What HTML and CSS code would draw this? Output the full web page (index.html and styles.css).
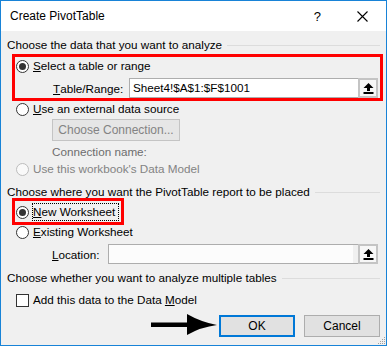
FILE: index.html
```html
<!DOCTYPE html>
<html lang="en">
<head>
    <meta charset="UTF-8">
    <meta name="viewport" content="width=device-width, initial-scale=1.0">
    <title>Create PivotTable</title>
    <link rel="stylesheet" href="styles.css">
</head>
<body>
    <div class="dialog">
        <div class="titlebar">
            <span class="title">Create PivotTable</span>
            <span class="help">?</span>
            <svg class="close" width="11" height="11" viewBox="0 0 11 11">
                <path d="M0.5 0.5 L10.5 10.5 M10.5 0.5 L0.5 10.5" stroke="#000" stroke-width="1.1" fill="none"/>
            </svg>
        </div>

        <div class="content">
            <div class="group-label"><span>Choose the data that you want to analyze</span></div>

            <div class="highlight highlight-range">
                <div class="option">
                    <span class="radio checked"></span>
                    <span><u>S</u>elect a table or range</span>
                </div>
                <div class="field">
                    <span class="field-label field-label-range"><u>T</u>able/Range:</span>
                    <div class="field-input">Sheet4!$A$1:$F$1001</div>
                    <span class="picker">
                        <svg width="11" height="11" viewBox="0 0 11 11">
                            <path d="M5.5 0 L10.5 5 L7 5 L7 8 L4 8 L4 5 L0.5 5 Z" fill="#000"/>
                            <rect x="0.5" y="9" width="10" height="2" fill="#000"/>
                        </svg>
                    </span>
                </div>
            </div>

            <div class="option">
                <span class="radio"></span>
                <span><u>U</u>se an external data source</span>
            </div>
            <button class="btn btn-disabled btn-connection" disabled>Choose Connection...</button>
            <div class="conn-name">Connection name:</div>
            <div class="option option-disabled">
                <span class="radio"></span>
                <span>Use this workbook's Data Model</span>
            </div>

            <div class="group-label group-label-place"><span>Choose where you want the PivotTable report to be placed</span></div>

            <div class="highlight highlight-new">
                <div class="option">
                    <span class="radio checked"></span>
                    <span class="focus"><u>N</u>ew Worksheet</span>
                </div>
            </div>

            <div class="option option-existing">
                <span class="radio"></span>
                <span><u>E</u>xisting Worksheet</span>
            </div>
            <div class="field field-location">
                <span class="field-label field-label-location"><u>L</u>ocation:</span>
                <div class="field-input field-input-disabled"></div>
                <span class="picker">
                    <svg width="11" height="11" viewBox="0 0 11 11">
                        <path d="M5.5 0 L10.5 5 L7 5 L7 8 L4 8 L4 5 L0.5 5 Z" fill="#000"/>
                        <rect x="0.5" y="9" width="10" height="2" fill="#000"/>
                    </svg>
                </span>
            </div>

            <div class="group-label group-label-tables"><span>Choose whether you want to analyze multiple tables</span></div>

            <div class="option option-check">
                <span class="checkbox"></span>
                <span>Add this data to the Data <u>M</u>odel</span>
            </div>

            <div class="actions">
                <svg class="pointer" width="66" height="21" viewBox="0 0 66 21">
                    <rect x="0" y="8.5" width="40" height="4.5" fill="#000"/>
                    <path d="M36 0 Q50 8 66 11 Q50 13 36 21 Z" fill="#000"/>
                </svg>
                <button class="btn btn-default">OK</button>
                <button class="btn">Cancel</button>
            </div>
        </div>

        <svg class="grip" width="9" height="9" viewBox="0 0 9 9">
            <rect x="7" y="1" width="1" height="1" fill="#a0a0a0"/>
            <rect x="5" y="3" width="1" height="1" fill="#a0a0a0"/>
            <rect x="7" y="3" width="1" height="1" fill="#a0a0a0"/>
            <rect x="3" y="5" width="1" height="1" fill="#a0a0a0"/>
            <rect x="5" y="5" width="1" height="1" fill="#a0a0a0"/>
            <rect x="7" y="5" width="1" height="1" fill="#a0a0a0"/>
            <rect x="1" y="7" width="1" height="1" fill="#a0a0a0"/>
            <rect x="3" y="7" width="1" height="1" fill="#a0a0a0"/>
            <rect x="5" y="7" width="1" height="1" fill="#a0a0a0"/>
            <rect x="7" y="7" width="1" height="1" fill="#a0a0a0"/>
        </svg>
    </div>
</body>
</html>
```

FILE: styles.css
```css
body {
    margin: 0;
    font-family: "Segoe UI", "Liberation Sans", Arial, sans-serif;
    font-size: 11.7px;
    color: #000;
}
.dialog {
    position: relative;
    width: 387px;
    height: 346px;
    box-sizing: border-box;
    border: 1px solid #1883d7;
    background: #f0f0f0;
    display: flex;
    flex-direction: column;
}
.titlebar {
    height: 30px;
    background: #fff;
    display: flex;
    align-items: center;
    padding: 0 18px 0 9px;
}
.title {
    font-size: 12px;
}
.help {
    margin-left: auto;
    font-size: 13px;
}
.close {
    margin-left: 36px;
}
.content {
    padding: 7px 6px 0 6px;
    display: flex;
    flex-direction: column;
}
.group-label {
    display: flex;
    align-items: center;
    height: 14px;
    line-height: 14px;
    white-space: nowrap;
}
.group-label::after {
    content: "";
    flex: 1;
    border-top: 1px solid #dcdcdc;
    margin-left: 5px;
}
.group-label-place {
    margin-top: 8px;
}
.group-label-tables {
    margin-top: 7px;
}
.highlight {
    border: 3px solid #f00;
    margin-left: 5px;
}
.highlight-range {
    margin: 2px -3px 0 5px;
    padding: 1px 0 0 1px;
}
.highlight-new {
    align-self: flex-start;
    margin-top: -1px;
    padding: 2px 2px 1px 1px;
}
.option {
    display: flex;
    align-items: center;
    height: 16px;
    line-height: 16px;
    padding-left: 9px;
    gap: 4px;
    white-space: nowrap;
}
.highlight .option {
    padding-left: 0;
}
.highlight-new .option {
    height: 18px;
    gap: 3px;
}
.option-disabled {
    margin-top: 1px;
    color: #838383;
}
.option-existing {
    margin-top: -1px;
}
.option-check {
    margin-top: 7px;
}
.radio {
    flex: none;
    width: 13px;
    height: 13px;
    box-sizing: border-box;
    border: 1px solid #333;
    border-radius: 50%;
    background: #fff;
    display: grid;
    place-items: center;
}
.radio.checked::after {
    content: "";
    width: 7px;
    height: 7px;
    border-radius: 50%;
    background: #333;
}
.option-disabled .radio {
    border-color: #bcbcbc;
    background: #f9f9f9;
}
.checkbox {
    flex: none;
    width: 13px;
    height: 13px;
    box-sizing: border-box;
    border: 1px solid #333;
    background: #fff;
}
.focus {
    height: 18px;
    line-height: 16px;
    box-sizing: border-box;
    border: 1px dotted #000;
    padding: 0 3px 0 0;
}
.field {
    display: flex;
    align-items: stretch;
    height: 20px;
    margin-top: 4px;
    padding: 0 2px 0 37px;
}
.field-location {
    padding-left: 45px;
}
.field-label {
    display: flex;
    align-items: center;
}
.field-label-range {
    width: 76px;
}
.field-label-location {
    width: 56px;
}
.field-input {
    flex: 1;
    box-sizing: border-box;
    border: 1px solid #adadad;
    border-right: none;
    background: #fff;
    padding-left: 3px;
    line-height: 18px;
}
.field-input-disabled {
    box-shadow: inset -5px 0 0 #f0f0f0;
    background: #fcfcfc;
}
.picker {
    width: 20px;
    box-sizing: border-box;
    border: 2px solid #c4c4c4;
    background: #f7f7f7;
    display: grid;
    place-items: center;
}
.btn {
    font-family: inherit;
    font-size: 12px;
    color: #000;
    height: 22px;
    padding: 0;
    box-sizing: border-box;
    border: 1px solid #adadad;
    background: #e1e1e1;
}
.btn-connection {
    align-self: flex-start;
    width: 128px;
    margin: 2px 0 0 45px;
    color: #838383;
}
.btn-disabled {
    background: #e6e6e6;
    border-color: #c4c4c4;
}
.conn-name {
    margin-top: 3px;
    height: 16px;
    line-height: 16px;
    padding-left: 45px;
    color: #6d6d6d;
}
.actions {
    display: flex;
    justify-content: flex-end;
    align-items: flex-start;
    margin-top: 7px;
}
.actions .btn {
    width: 76px;
    margin-left: 9px;
}
.actions .btn-default {
    margin-left: 2px;
    border: 2px solid #0078d7;
}
.pointer {
    margin-top: -1px;
}
.grip {
    position: absolute;
    right: 0;
    bottom: 0;
}
```
